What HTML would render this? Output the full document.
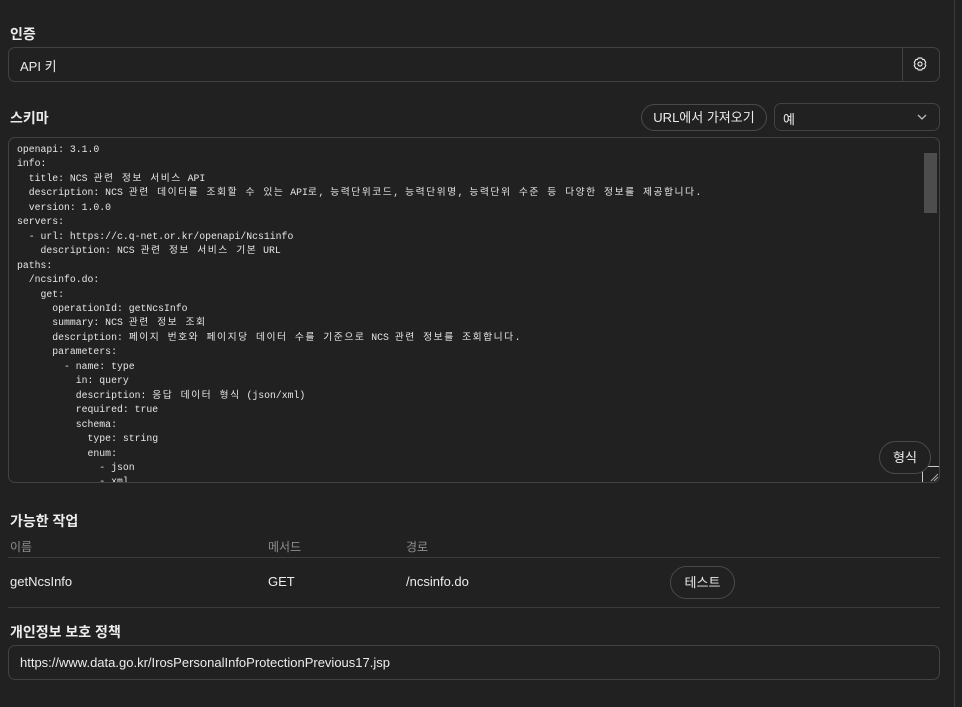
<!DOCTYPE html>
<html><head><meta charset="utf-8"><style>
*{box-sizing:border-box;margin:0;padding:0}
body{width:962px;height:707px;background:#212121;color:#ececec;font-family:"Liberation Sans","Noto Sans CJK KR",sans-serif;position:relative;overflow:hidden;font-size:13px}
.a{position:absolute}
.lbl{font-size:14px;font-weight:bold;color:#ececec}
.box{border:1px solid #424242;border-radius:7px}
pre{font-family:"Liberation Mono","Noto Sans CJK KR",monospace;font-size:9.8px;line-height:14.45px;color:#e6e6e6;white-space:pre}
.k{letter-spacing:1.5px}
.hd{font-size:12px;color:#8f8f8f}
.pill{border:1px solid #4a4a4a;border-radius:17px;text-align:center}
</style></head><body>
<div class="a" style="left:954px;top:0;width:1px;height:707px;background:#3a3a3a"></div>
<div class="a lbl" style="left:10px;top:24px">인증</div>
<div class="a box" style="left:8px;top:47px;width:932px;height:35px"></div>
<div class="a" style="left:20px;top:56px;font-size:13px">API 키</div>
<div class="a" style="left:902px;top:48px;width:1px;height:33px;background:#424242"></div>
<svg class="a" style="left:912px;top:56px" width="16" height="16" viewBox="0 0 24 24" fill="none" stroke="#e0e0e0" stroke-width="1.8" stroke-linejoin="round"><path d="M9.5 3h5l1.2 2.2 2.5.1 2.5 4.3-1.3 2.4 1.3 2.4-2.5 4.3-2.5.1L14.5 21h-5l-1.2-2.2-2.5-.1-2.5-4.3 1.3-2.4-1.3-2.4 2.5-4.3 2.5-.1z"/><circle cx="12" cy="12" r="3"/></svg>
<div class="a lbl" style="left:10px;top:108px">스키마</div>
<div class="a pill" style="left:641px;top:104px;width:126px;height:27px;line-height:25px;font-size:13px">URL에서 가져오기</div>
<div class="a box" style="left:774px;top:103px;width:166px;height:28px"></div>
<div class="a" style="left:783px;top:109px;font-size:13px">예</div>
<svg class="a" style="left:916px;top:112px" width="12" height="10" viewBox="0 0 12 10"><path d="M2 3l4 4 4-4" fill="none" stroke="#bbb" stroke-width="1.3"/></svg>
<div class="a box" style="left:8px;top:137px;width:932px;height:346px;overflow:hidden">
<pre class="a" style="left:8px;top:5px">openapi: 3.1.0
info:
  title: NCS <span class="k">관련 정보 서비스</span> API
  description: NCS <span class="k">관련 데이터를 조회할 수 있는</span> API<span class="k">로</span>, <span class="k">능력단위코드</span>, <span class="k">능력단위명</span>, <span class="k">능력단위 수준 등 다양한 정보를 제공합니다</span>.
  version: 1.0.0
servers:
  - url: https://c.q-net.or.kr/openapi/Ncs1info
    description: NCS <span class="k">관련 정보 서비스 기본</span> URL
paths:
  /ncsinfo.do:
    get:
      operationId: getNcsInfo
      summary: NCS <span class="k">관련 정보 조회</span>
      description: <span class="k">페이지 번호와 페이지당 데이터 수를 기준으로</span> NCS <span class="k">관련 정보를 조회합니다</span>.
      parameters:
        - name: type
          in: query
          description: <span class="k">응답 데이터 형식</span> (json/xml)
          required: true
          schema:
            type: string
            enum:
              - json
              - xml</pre>
<div class="a" style="left:915px;top:15px;width:13px;height:60px;background:#4d4d4d"></div>
<div class="a" style="left:913px;top:328px;width:19px;height:18px;border-left:1px solid #ccc;border-top:1px solid #ccc;background:#212121"></div>
<svg class="a" style="left:920px;top:334px" width="10" height="10"><path d="M2 9L9 2M5 9L9 5" stroke="#aaa" stroke-width="1"/></svg>
</div>
<div class="a pill" style="left:879px;top:441px;width:52px;height:33px;line-height:31px;background:#212121;font-size:13px">형식</div>
<div class="a lbl" style="left:10px;top:511px">가능한 작업</div>
<div class="a hd" style="left:10px;top:538px">이름</div>
<div class="a hd" style="left:268px;top:538px">메서드</div>
<div class="a hd" style="left:406px;top:538px">경로</div>
<div class="a" style="left:8px;top:557px;width:932px;height:1px;background:#3c3c3c"></div>
<div class="a" style="left:10px;top:574px">getNcsInfo</div>
<div class="a" style="left:268px;top:574px">GET</div>
<div class="a" style="left:406px;top:574px">/ncsinfo.do</div>
<div class="a pill" style="left:670px;top:566px;width:65px;height:33px;line-height:31px">테스트</div>
<div class="a" style="left:8px;top:607px;width:932px;height:1px;background:#3c3c3c"></div>
<div class="a lbl" style="left:10px;top:622px">개인정보 보호 정책</div>
<div class="a box" style="left:8px;top:645px;width:932px;height:35px"></div>
<div class="a" style="left:20px;top:655px">https://www.data.go.kr/IrosPersonalInfoProtectionPrevious17.jsp</div>
</body></html>
